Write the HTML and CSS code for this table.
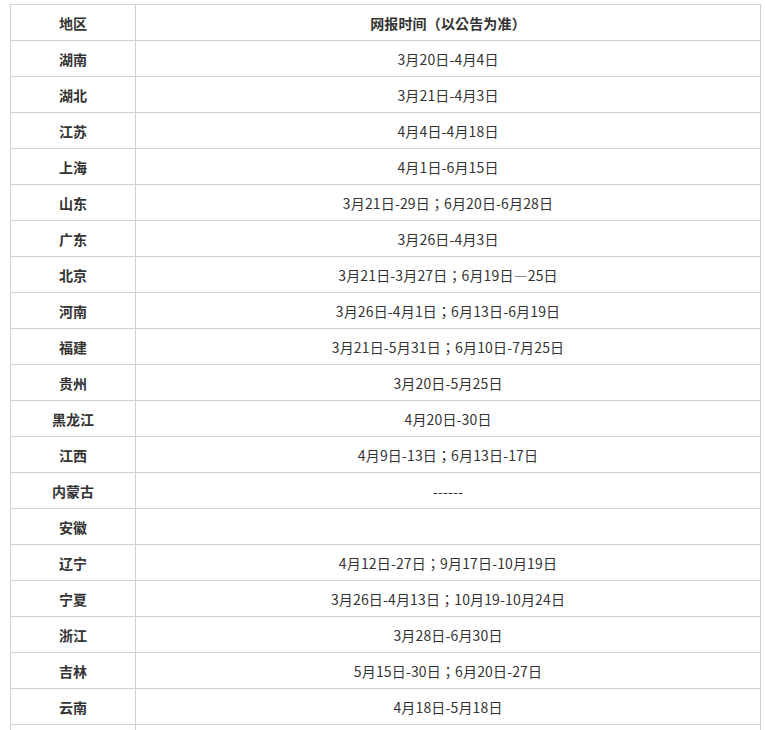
FILE: index.html
```html
<!DOCTYPE html>
<html lang="zh">
<head>
<meta charset="utf-8">
<link rel="stylesheet" href="styles.css">
</head>
<body>
<table class="sched">
  <colgroup><col class="c-region"><col class="c-time"></colgroup>
  <tr><th>地区</th><th class="tm" lang="zh-Hant">网报时间（以公告为准）</th></tr>
  <tr><td class="rg">湖南</td><td class="tm">3月20日-4月4日</td></tr>
  <tr><td class="rg">湖北</td><td class="tm">3月21日-4月3日</td></tr>
  <tr><td class="rg">江苏</td><td class="tm">4月4日-4月18日</td></tr>
  <tr><td class="rg">上海</td><td class="tm">4月1日-6月15日</td></tr>
  <tr><td class="rg">山东</td><td class="tm" lang="zh-Hant">3月21日-29日；6月20日-6月28日</td></tr>
  <tr><td class="rg">广东</td><td class="tm">3月26日-4月3日</td></tr>
  <tr><td class="rg">北京</td><td class="tm" lang="zh-Hant">3月21日-3月27日；6月19日—25日</td></tr>
  <tr><td class="rg">河南</td><td class="tm" lang="zh-Hant">3月26日-4月1日；6月13日-6月19日</td></tr>
  <tr><td class="rg">福建</td><td class="tm" lang="zh-Hant">3月21日-5月31日；6月10日-7月25日</td></tr>
  <tr><td class="rg">贵州</td><td class="tm">3月20日-5月25日</td></tr>
  <tr><td class="rg">黑龙江</td><td class="tm">4月20日-30日</td></tr>
  <tr><td class="rg">江西</td><td class="tm" lang="zh-Hant">4月9日-13日；6月13日-17日</td></tr>
  <tr><td class="rg">内蒙古</td><td class="tm">------</td></tr>
  <tr><td class="rg">安徽</td><td class="tm"></td></tr>
  <tr><td class="rg">辽宁</td><td class="tm" lang="zh-Hant">4月12日-27日；9月17日-10月19日</td></tr>
  <tr><td class="rg">宁夏</td><td class="tm" lang="zh-Hant">3月26日-4月13日；10月19-10月24日</td></tr>
  <tr><td class="rg">浙江</td><td class="tm">3月28日-6月30日</td></tr>
  <tr><td class="rg">吉林</td><td class="tm" lang="zh-Hant">5月15日-30日；6月20日-27日</td></tr>
  <tr><td class="rg">云南</td><td class="tm">4月18日-5月18日</td></tr>
  <tr><td class="rg"></td><td class="tm"></td></tr>
</table>
</body>
</html>
```

FILE: styles.css
```css
html, body {
  margin: 0;
  padding: 0;
  background: #fff;
}
body {
  font-family: "Noto Sans CJK SC", "Noto Sans", sans-serif;
  font-size: 14px;
  color: #333;
}
.sched {
  border-collapse: collapse;
  width: 751px;
  margin: 4px 0 0 10px;
  table-layout: fixed;
}
.c-region { width: 125px; }
.sched th, .sched td {
  border: 1px solid #d0d0d0;
  height: 36px;
  box-sizing: border-box;
  padding: 0;
  text-align: center;
  vertical-align: middle;
  line-height: 20px;
}
.sched .tm {
  font-family: "Noto Sans CJK TC", "Noto Sans CJK JP", "Noto Sans CJK SC", sans-serif;
  letter-spacing: 0.15px;
}
.sched th { font-weight: bold; }
.sched td.rg { font-weight: bold; }
```
